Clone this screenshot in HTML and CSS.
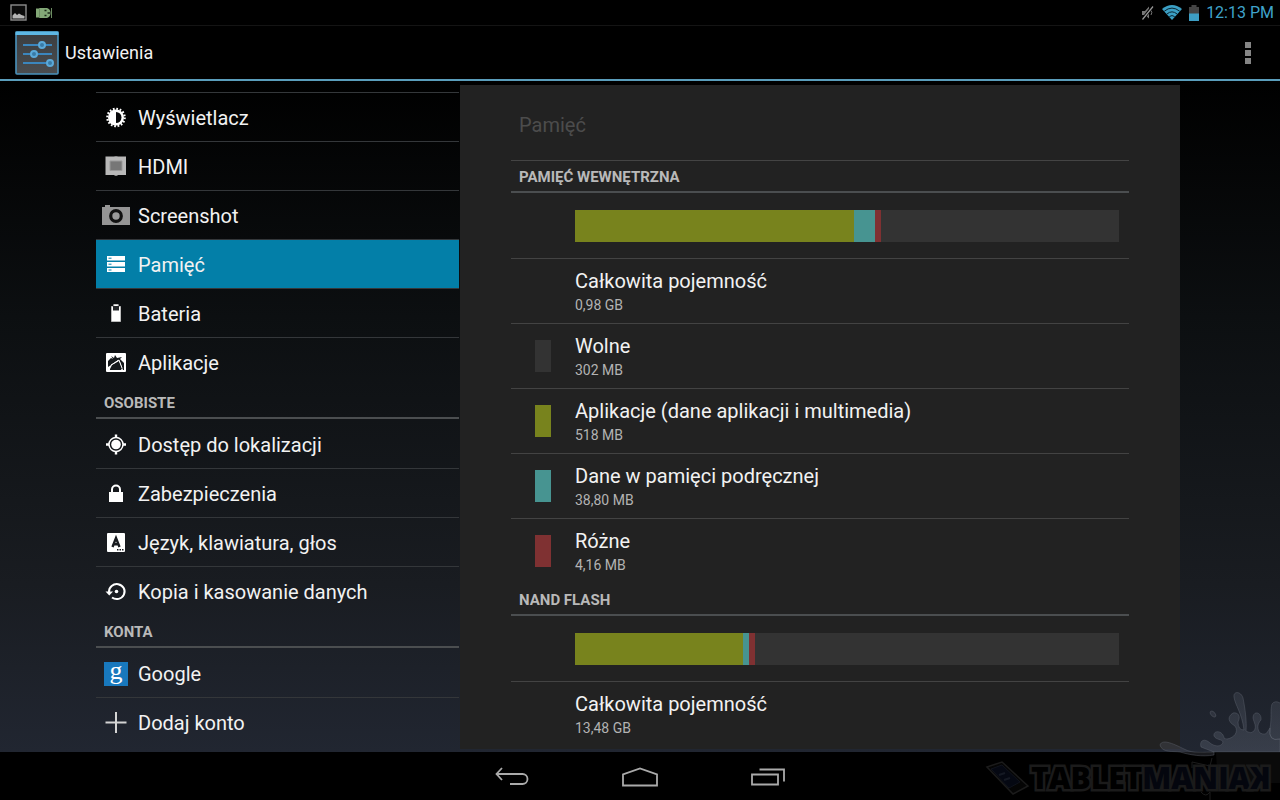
FILE: index.html
```html
<!DOCTYPE html>
<html lang="pl">
<head>
<meta charset="utf-8">
<meta name="viewport" content="width=device-width, initial-scale=1">
<title>Ustawienia</title>
<link rel="stylesheet" href="styles.css">
</head>
<body>
<div class="device">
  <div class="status-bar">
    <div class="status-group">
      <svg width="17" height="17" viewBox="0 0 17 17"><rect x="1" y="1" width="15" height="15" fill="#0b0b0b" stroke="#8c8c8c" stroke-width="1.4"/><path d="M2.500 14.500v-3l2.500-2.500 2 2 2-1.500 2.500 1.500 3 1v2.500z" fill="#b4b4b4"/></svg>
      <svg width="17" height="12" viewBox="0 0 17 12"><path d="M0 1.500h3V1h8q3.500 1 3.500 5T11 11H3v-.500H0z" fill="#83a877"/><path d="M15.500 1v10M3.500 1v10" stroke="#6c8c62" stroke-width="1"/><path d="M8.500 3.500h2M8.500 8.500h2M11.500 6H14" stroke="#1b2a18" stroke-width="1.300"/></svg>
    </div>
    <div class="status-group status-right">
      <svg width="14" height="16" viewBox="0 0 14 16"><path d="M1 6h3l4-4.500v12L4 10H1z" fill="#777"/><path d="M1.500 14.500L12 1" stroke="#000" stroke-width="3"/><path d="M1.500 14.500L12 1.500" stroke="#999" stroke-width="1.200"/><path d="M10 5.500q1.700 2 0 4.500" fill="none" stroke="#777"/></svg>
      <svg width="20" height="15" viewBox="0 0 20 15"><path d="M10 15L0 4Q10-4 20 4z" fill="#3b9fc4"/><path d="M2.300 6.200Q10 0 17.700 6.200M4.900 9Q10 4.700 15.100 9M7.300 11.600Q10 9.500 12.700 11.600" fill="none" stroke="#0a2531" stroke-width="1"/></svg>
      <svg width="10" height="16" viewBox="0 0 10 16"><path d="M0 2h2.500V0h5v2H10v7H0z" fill="#444"/><path d="M0 8.500h10V16H0z" fill="#3d9ec4"/></svg>
      <time class="clock">12:13 PM</time>
    </div>
  </div>
  <header class="action-bar">
    <svg class="app-icon" width="44" height="44" viewBox="0 0 44 44">
      <defs><linearGradient id="tile" x2="0" y2="1"><stop stop-color="#3a3d40"/><stop offset="1" stop-color="#4b4d4f"/></linearGradient></defs>
      <rect x="1" y="1" width="42" height="42" rx="1" fill="url(#tile)" stroke="#4a93bd" stroke-width="1.600"/>
      <path d="M.5 .5h43v3.500H.5z" fill="#5db7e4"/>
      <g stroke="#3b86bd" stroke-width="2"><path d="M8 14h18M30 14h7M8 23h10M22 23h15M8 32h24"/></g>
      <g fill="#397ba6" stroke="#5ba9d8" stroke-width="2"><circle cx="27" cy="14" r="3"/><circle cx="19" cy="23" r="3"/><circle cx="35" cy="32" r="3"/></g>
    </svg>
    <h1 class="app-title">Ustawienia</h1>
    <button class="overflow" type="button" aria-label="Więcej opcji"><i></i><i></i><i></i></button>
  </header>
  <main class="content">
    <nav class="menu">
      <a class="item" href="#"><svg class="icon" viewBox="0 0 28 28"><circle cx="14" cy="13.500" r="8.700" fill="none" stroke="#fff" stroke-width="2.200" stroke-dasharray="1.710 1.710"/><circle cx="14" cy="13.500" r="8" fill="#fff"/><path d="M14 8a5.500 5.500 0 010 11z" fill="#08090b"/></svg>Wyświetlacz</a>
      <a class="item" href="#"><svg class="icon" viewBox="0 0 28 28"><path d="M3.500 3.500h20.500v18.500H3.500z" fill="#b8b8b8"/><path d="M8 8h12v9.500H8z" fill="#777" stroke="#999"/><path d="M12.500 3h3v1h-3zM12.500 22h3v1h-3z" fill="#888"/></svg>HDMI</a>
      <a class="item" href="#"><svg class="icon" viewBox="0 0 28 28"><path d="M0 5h3V3h5v2h20v18H0z" fill="#959595"/><circle cx="14" cy="14" r="5.300" fill="#999" stroke="#111" stroke-width="3.200"/></svg>Screenshot</a>
      <a class="item selected" href="#" aria-current="page"><svg class="icon" viewBox="0 0 28 28"><path d="M5 5h18v4.500H5zM5 11h18v4.500H5zM5 17h18v4H5z" fill="#fff"/><path d="M6.500 7.200h3M6.500 13.200h3M6.500 19h3" stroke="#0580a9"/></svg>Pamięć</a>
      <a class="item" href="#"><svg class="icon" viewBox="0 0 28 28"><path d="M9.500 21.500V6.500h2.300v-2h4.400v2h2.300v15z" fill="#fff" stroke="#bbb"/><path d="M11 6h6v4.500h-6z" fill="#25272a"/></svg>Bateria</a>
      <a class="item" href="#"><svg class="icon" viewBox="0 0 28 28"><rect x="4" y="4" width="20" height="19" rx="1" fill="#fff"/><path d="M6 12l3-3 2 1-2-3 3 2 1-3 2 3 5-1-2 2 4 4v7h-1l-3-8-2-2-4 3-6 4z" fill="#15191c"/><path d="M8 20l2-4 7-4 3 7-1 2H8z" fill="#15191c"/><path d="M9 16l8-5 3 8" fill="none" stroke="#fff"/></svg>Aplikacje</a>
      <h2 class="section">OSOBISTE</h2>
      <a class="item" href="#"><svg class="icon" viewBox="0 0 28 28"><circle cx="14" cy="13.500" r="7" fill="none" stroke="#fff" stroke-width="1.500"/><circle cx="14" cy="13.500" r="4.800" fill="#fff"/><path d="M14 3.500v3M14 20.500v3M4 13.500h3M21 13.500h3" stroke="#fff" stroke-width="2.400"/></svg>Dostęp do lokalizacji</a>
      <a class="item" href="#"><svg class="icon" viewBox="0 0 28 28"><path d="M7 12h14v10H7z" fill="#fff"/><path d="M10 12V9.500a4 4 0 018 0V12" fill="none" stroke="#fff" stroke-width="2"/></svg>Zabezpieczenia</a>
      <a class="item" href="#"><svg class="icon" viewBox="0 0 28 28"><rect x="5" y="4" width="18" height="19" rx="1" fill="#fff"/><path d="M10.500 18L14 9l3.500 9M12 15.300h4" fill="none" stroke="#181b20" stroke-width="2.400"/><path d="M15 20.800h7" stroke="#181b20" stroke-width="1.500" stroke-dasharray="1.500 1"/></svg>Język, klawiatura, głos</a>
      <a class="item" href="#"><svg class="icon" viewBox="0 0 28 28"><path d="M7 14a7.800 7.500 0 113 5.500" fill="none" stroke="#fff" stroke-width="2"/><path d="M3.500 13.500h7.500L7.300 17.500z" fill="#fff"/><circle cx="14.500" cy="13.500" r="1.800" fill="#fff"/></svg>Kopia i kasowanie danych</a>
      <h2 class="section">KONTA</h2>
      <a class="item" href="#"><span class="icon google" aria-hidden="true">g</span>Google</a>
      <a class="item" href="#"><svg class="icon" viewBox="0 0 28 28"><path d="M14 3v21M3.500 13.500h21" stroke="#d4d4d4" stroke-width="2"/></svg>Dodaj konto</a>
    </nav>
    <section class="panel">
      <h2 class="panel-title">Pamięć</h2>
      <h3 class="section first">PAMIĘĆ WEWNĘTRZNA</h3>
      <div class="usage"><div class="bar"><span class="apps" style="width:51.3%"></span><span class="cache" style="width:3.9%"></span><span class="misc" style="width:1.1%"></span></div></div>
      <dl class="rows">
        <div class="row"><dt>Całkowita pojemność</dt><dd>0,98 GB</dd></div>
        <div class="row"><i class="swatch free"></i><dt>Wolne</dt><dd>302 MB</dd></div>
        <div class="row"><i class="swatch apps"></i><dt>Aplikacje (dane aplikacji i multimedia)</dt><dd>518 MB</dd></div>
        <div class="row"><i class="swatch cache"></i><dt>Dane w pamięci podręcznej</dt><dd>38,80 MB</dd></div>
        <div class="row"><i class="swatch misc"></i><dt>Różne</dt><dd>4,16 MB</dd></div>
      </dl>
      <h3 class="section">NAND FLASH</h3>
      <div class="usage"><div class="bar"><span class="apps" style="width:30.9%"></span><span class="cache" style="width:1.1%"></span><span class="misc" style="width:1.1%"></span></div></div>
      <dl class="rows">
        <div class="row"><dt>Całkowita pojemność</dt><dd>13,48 GB</dd></div>
      </dl>
    </section>
  </main>
  <footer class="nav-bar">
    <button type="button" aria-label="Wstecz"><svg width="34" height="20" viewBox="0 0 34 20"><path d="M7 1L1.500 7 7 13M2 7h25.500a4.800 4.800 0 010 10H15" fill="none" stroke="#aaa" stroke-width="1.800"/></svg></button>
    <button type="button" aria-label="Ekran główny"><svg width="36" height="20" viewBox="0 0 36 20"><path d="M1 18.500V7.500L18 1.500l17 6v11z" fill="none" stroke="#aaa" stroke-width="1.800"/></svg></button>
    <button type="button" aria-label="Ostatnie aplikacje"><svg width="34" height="18" viewBox="0 0 34 18"><path d="M1 6.500h26v10H1zM8.500 1.500H33v12" fill="none" stroke="#aaa" stroke-width="1.800"/></svg></button>
  </footer>
  <div class="watermark">
    <svg class="splash" width="124" height="112" viewBox="0 0 124 112">
      <defs><linearGradient id="drop" x2="0" y2="1"><stop stop-color="#5b6270" stop-opacity=".25"/><stop offset="1" stop-color="#5b6270" stop-opacity=".4"/></linearGradient></defs>
      <path d="M124 51Q112 54 114 40C116 30 114 22 116 16Q119 12 124 15M58 64H124V51Q112 54 114 40L112 43Q110 48 104 45C101 41 101 36 105 32 106 24 97 22 97 30 98 35 101 38 98 43Q95 46 92 44L90 43C91 34 89 20 87 10 85 3 77 3 78 9 79 17 86 25 88 42Q82 42 82 34C85 28 82 24 77 25 71 29 72 34 79 38 83 44 78 50 71 51Q68 52 67 47C64 42 57 43 58 48 60 52 66 51 67 54 66 59 59 59 54 55 49 50 43 52 45 59Q50 61 58 64z" fill="url(#drop)" stroke="#6a707b" stroke-opacity=".35"/>
      <path d="M58 64C49 64 37 66 28 61 20 57 6 50 4 57 6 65 17 63 24 64 34 67 46 69 58 67z" fill="#555b66" fill-opacity=".3" stroke="#636974" stroke-opacity=".4"/>
      <ellipse cx="57" cy="26" rx="2" ry="3.500" transform="rotate(-40 57 26)" fill="#555b66" fill-opacity=".3" stroke="#636974" stroke-opacity=".4"/>
      <path d="M60 65h64v30H62z" fill="#111" fill-opacity=".6"/>
      <path d="M36 74l18 4 2-8M36 74v6M45 104q5 6 9 0v8" fill="none" stroke="#1d1d1d"/>
    </svg>
    <div class="brand">
      <svg width="45" height="36" viewBox="0 0 45 36"><path d="M2 7L17 2l26 24-15 8z" fill="#050505" stroke="#1b1b1b" stroke-width="1.500"/><path d="M6 9l11-4 18 17-11 6z" fill="#050812" stroke="#10131c"/><path d="M14 15l6-2M19 20l6-2" stroke="#151923" stroke-width="2"/></svg>
      <span class="brand-text">TABLET<span class="maniak">MANIA<span class="flipped">K</span></span></span>
    </div>
  </div>
</div>
</body>
</html>
```
FILE: styles.css
```css
* { box-sizing: border-box; }
body { margin: 0; background: #000; color: #f2f2f2; font-family: Roboto, "Noto Sans", sans-serif; }
h1, h2, h3, dl, dd { margin: 0; font-weight: 400; }
svg { display: block; flex: none; }
button { border: 0; padding: 0; background: none; }

.device { position: relative; display: flex; flex-direction: column; min-height: 100vh; overflow: hidden; }

.status-bar { display: flex; justify-content: space-between; align-items: center; height: 26px; padding: 0 6px 0 10px; border-bottom: 1px solid #141414; }
.status-group { display: flex; align-items: center; gap: 9px; }
.status-right { gap: 7px; }
.clock { color: #3fa3cb; font-size: 16px; line-height: 24px; }

.action-bar { display: flex; align-items: center; height: 55px; padding: 0 29px 0 15px; border-bottom: 2px solid #5a9dbb; }
.app-title { flex: 1; margin-left: 6px; font-size: 18px; line-height: 24px; }
.overflow { display: grid; gap: 2px; }
.overflow i { width: 6px; height: 6px; background: #858585; }

.content { flex: 1; display: flex; gap: 1px; padding: 4px 100px 3px 96px; background: linear-gradient(#000 0%, #0c0f11 35%, #191c21 75%, #212631 100%); }

.menu { flex: none; width: 363px; padding-top: 7px; }
.item { display: flex; align-items: center; height: 49px; padding: 1px 6px 0; border-top: 1px solid #34373a; color: #f2f2f2; font-size: 20px; text-decoration: none; }
.section + .item { border-top: 0; padding-top: 2px; }
.item.selected { background: #037fa8; }
.icon { width: 28px; height: 28px; margin-right: 8px; }
.google { width: 24px; height: 24px; margin: 0 10px 0 2px; background: #1878bd; color: #fff; font-family: "Liberation Serif", serif; font-size: 26px; line-height: 18px; text-align: center; }

.section { height: 33px; padding: 2px 8px 0; border-bottom: 2px solid #4b4e50; color: #b9b9b9; font-size: 15px; font-weight: 700; line-height: 30px; }
.section.first { padding-top: 1px; border-top: 1px solid #444; }

.panel { flex: 1; min-width: 0; padding: 0 51px; background: #222; }
.panel-title { height: 75px; padding: 24px 8px 0; color: #4c4c4c; font-size: 20px; line-height: 32px; }
.usage { padding: 17px 10px 16px 64px; border-bottom: 1px solid #434343; }
.bar { display: flex; height: 32px; background: #333; }
.row { position: relative; height: 65px; padding: 10px 0 0 64px; border-bottom: 1px solid #434343; }
.row:last-child { height: 64px; border-bottom: 0; }
.row dt { font-size: 20px; line-height: 24px; }
.row dd { color: #b3b3b3; font-size: 14px; line-height: 24px; }
.swatch { position: absolute; left: 24px; top: 16px; width: 16px; height: 32px; }
.free { background: #333; }
.apps { background: #78831d; }
.cache { background: #479491; }
.misc { background: #7f3132; }

.nav-bar { display: flex; justify-content: center; align-items: center; gap: 93px; height: 48px; padding-top: 2px; background: #000; }

.watermark { position: absolute; right: 0; bottom: 0; pointer-events: none; }
.splash { position: absolute; right: 0; bottom: 0; }
.brand { position: relative; display: flex; align-items: center; gap: 1px; padding: 0 9px 2px 0; }
.brand-text { color: #000; font-family: "Open Sans", sans-serif; font-size: 30px; font-weight: 800; line-height: 40px; -webkit-text-stroke: 5px #1b1b1b; paint-order: stroke fill; }
.maniak { color: #04060e; }
.flipped { display: inline-block; transform: scaleX(-1); }
```
